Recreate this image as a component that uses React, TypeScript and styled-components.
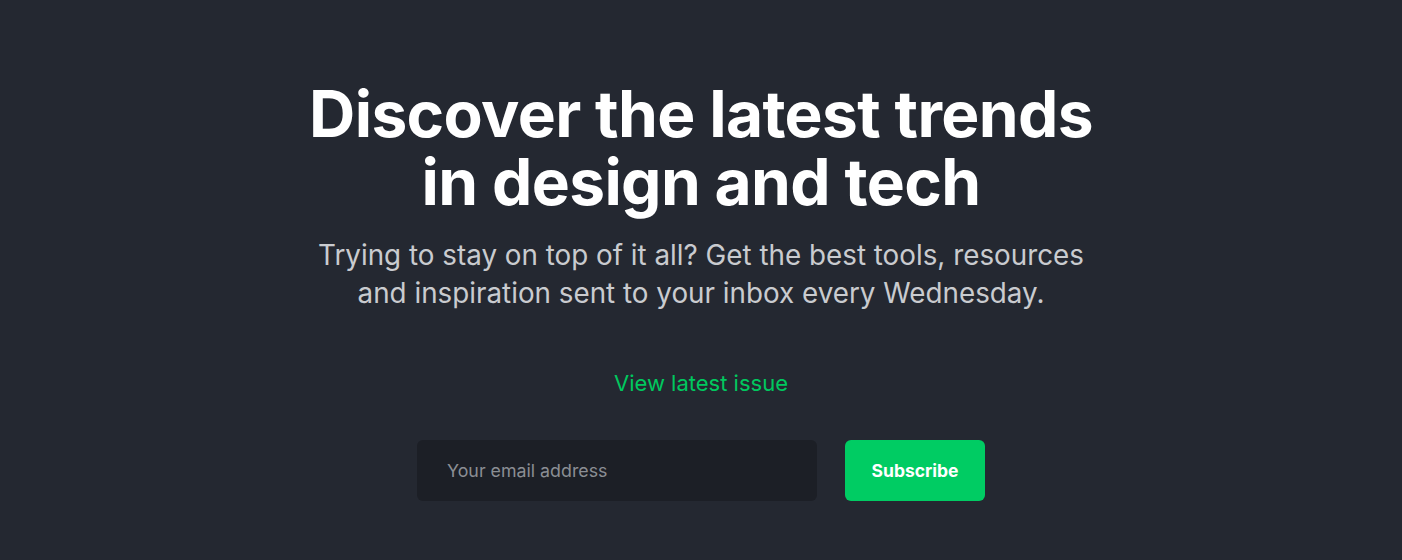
import React from "react";
import styled, { createGlobalStyle } from "styled-components";

const Global = createGlobalStyle`
  html, body { margin: 0; padding: 0; background: #242831; }
  body { font-family: Inter, "Noto Sans", sans-serif; -webkit-font-smoothing: antialiased; }
  * { box-sizing: border-box; }
`;

const Section = styled.section`
  width: 1402px;
  height: 560px;
  background: #242831;
  display: flex;
  flex-direction: column;
  align-items: center;
  padding-top: 80px;
`;

const Title = styled.h1`
  margin: 0;
  color: #ffffff;
  font-size: 64px;
  line-height: 68px;
  font-weight: 700;
  text-align: center;
  letter-spacing: -0.64px;
  max-width: 820px;
`;

const Lead = styled.p`
  margin: 20px 0 0;
  color: #c9cbcf;
  font-size: 27.8px;
  line-height: 38px;
  font-weight: 400;
  text-align: center;
  max-width: 800px;
`;

const Link = styled.a`
  margin-top: 56px;
  color: #00c85f;
  font-size: 22px;
  line-height: 30px;
  text-decoration: none;
`;

const Form = styled.form`
  margin-top: 42px;
  display: flex;
  gap: 28px;
`;

const Input = styled.input`
  width: 400px;
  height: 61px;
  border: none;
  border-radius: 6px;
  background: #1c1f26;
  padding: 0 30px;
  color: #fff;
  font-family: Inter, sans-serif;
  font-size: 17.8px;
  outline: none;
  &::placeholder { color: #8b8e94; }
`;

const Button = styled.button`
  width: 140px;
  height: 61px;
  border: none;
  border-radius: 6px;
  background: #00cc63;
  color: #fff;
  font-family: Inter, sans-serif;
  font-size: 17.5px;
  font-weight: 700;
  cursor: pointer;
`;

export default function App() {
  return (
    <>
      <Global />
      <Section>
        <Title>Discover the latest trends in design and tech</Title>
        <Lead>
          Trying to stay on top of it all? Get the best tools, resources and
          inspiration sent to your inbox every Wednesday.
        </Lead>
        <Link href="#">View latest issue</Link>
        <Form onSubmit={(e) => e.preventDefault()}>
          <Input type="email" placeholder="Your email address" />
          <Button type="submit">Subscribe</Button>
        </Form>
      </Section>
    </>
  );
}
